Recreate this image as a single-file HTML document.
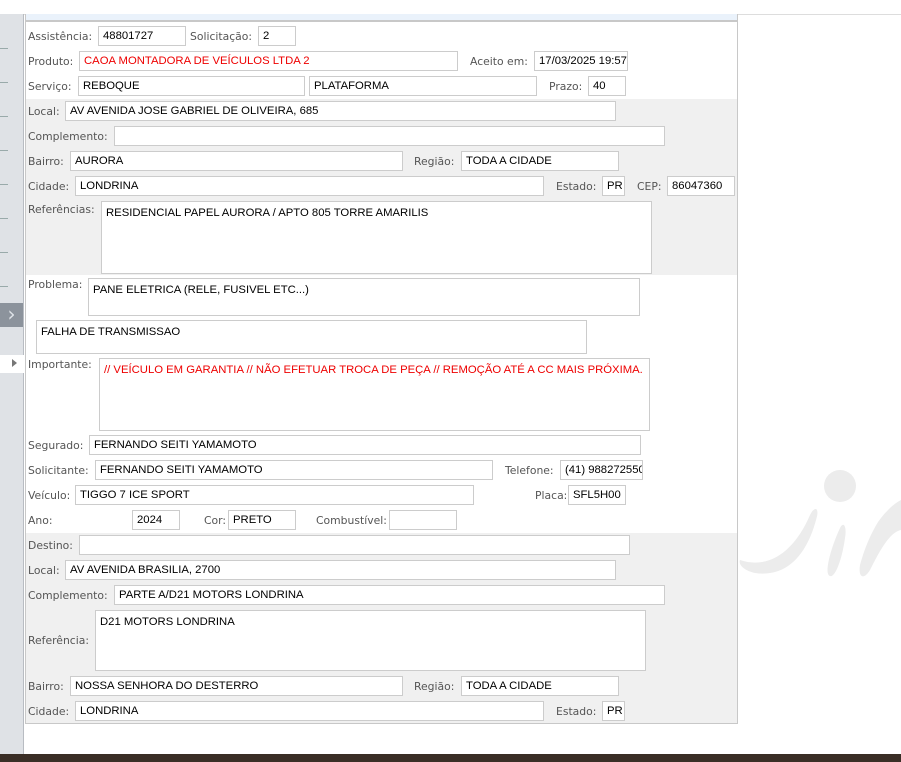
<!DOCTYPE html>
<html><head><meta charset="utf-8"><style>
*{margin:0;padding:0;box-sizing:border-box}
body{width:901px;height:762px;background:#fff;position:relative;overflow:hidden;font-family:"DejaVu Sans",Verdana,sans-serif}
.a{position:absolute}
.l{position:absolute;font-size:10.8px;color:#555;line-height:20px;white-space:nowrap}
.i{position:absolute;background:#fff;border:1px solid #ccc;height:20px;font-family:"Liberation Sans",Tahoma,sans-serif;font-size:11.3px;color:#000;line-height:19px;padding-left:4px;white-space:nowrap;overflow:hidden}
.t{line-height:14px;padding-top:4px}
.r{color:#e00}
.g{position:absolute;left:26px;width:711px;background:#f0f0f0}
.tick{position:absolute;left:0;width:8px;height:1px;background:#9aa}
</style></head><body>
<div class="a" style="left:0;top:14px;width:901px;height:1px;background:#ddd"></div>
<div class="a" style="left:0;top:14px;width:24px;height:740px;background:#dfe2e6;border-right:1px solid #b8bcc2"></div>
<div class="tick" style="top:48px"></div><div class="tick" style="top:82px"></div><div class="tick" style="top:116px"></div><div class="tick" style="top:150px"></div><div class="tick" style="top:184px"></div><div class="tick" style="top:218px"></div><div class="tick" style="top:252px"></div><div class="tick" style="top:286px"></div>
<div class="a" style="left:0;top:303px;width:23px;height:24px;background:#8c939c;color:#dfe3e8;font-size:20px;line-height:22px;text-align:center">›</div>
<div class="a" style="left:0;top:355px;width:24px;height:18px;background:#fff"></div>
<div class="a" style="left:12px;top:359px;width:0;height:0;border-left:5px solid #777;border-top:4px solid transparent;border-bottom:4px solid transparent"></div>
<div class="a" style="left:25px;top:14px;width:713px;height:710px;border:1px solid #c8c8c8;border-top:none"></div>
<div class="a" style="left:26px;top:14px;width:711px;height:8px;background:#eaf2fb;border-bottom:2px solid #c8c8c8"></div>
<div class="g" style="top:99px;height:176px"></div>
<div class="g" style="top:533px;height:190px"></div>
<svg class="a" style="left:730px;top:460px" width="171" height="120" viewBox="0 0 171 120">
<circle cx="110" cy="26" r="16" fill="#ececec"/>
<path d="M10 100 C40 110 65 90 80 55 C85 45 90 48 86 60 C78 90 60 118 25 113 C15 111 8 105 10 100Z" fill="#ececec"/>
<path d="M115 78 C112 100 105 118 100 116 C94 114 100 90 110 68 C114 60 117 68 115 78Z" fill="#ececec"/>
<path d="M148 62 C160 45 171 40 171 40 L171 70 C160 72 150 90 140 110 C134 120 128 118 130 105 C134 90 140 75 148 62Z" fill="#ececec"/>
</svg>
<div class="l" style="left:28px;top:27px">Assistência:</div><div class="i" style="left:98px;top:26px;width:88px">48801727</div>
<div class="l" style="left:190px;top:27px">Solicitação:</div><div class="i" style="left:258px;top:26px;width:38px">2</div>
<div class="l" style="left:28px;top:52px">Produto:</div><div class="i r" style="left:79px;top:51px;width:379px">CAOA MONTADORA DE VEÍCULOS LTDA 2</div>
<div class="l" style="left:470px;top:52px">Aceito em:</div><div class="i" style="left:534px;top:51px;width:94px">17/03/2025 19:57</div>
<div class="l" style="left:28px;top:77px">Serviço:</div><div class="i" style="left:78px;top:76px;width:227px">REBOQUE</div><div class="i" style="left:309px;top:76px;width:228px">PLATAFORMA</div>
<div class="l" style="left:549px;top:77px">Prazo:</div><div class="i" style="left:588px;top:76px;width:38px">40</div>
<div class="l" style="left:28px;top:102px">Local:</div><div class="i" style="left:65px;top:101px;width:551px">AV AVENIDA JOSE GABRIEL DE OLIVEIRA, 685</div>
<div class="l" style="left:28px;top:127px">Complemento:</div><div class="i" style="left:114px;top:126px;width:551px"></div>
<div class="l" style="left:28px;top:152px">Bairro:</div><div class="i" style="left:70px;top:151px;width:333px">AURORA</div>
<div class="l" style="left:414px;top:152px">Região:</div><div class="i" style="left:461px;top:151px;width:158px">TODA A CIDADE</div>
<div class="l" style="left:28px;top:177px">Cidade:</div><div class="i" style="left:75px;top:176px;width:469px">LONDRINA</div>
<div class="l" style="left:556px;top:177px">Estado:</div><div class="i" style="left:602px;top:176px;width:23px">PR</div>
<div class="l" style="left:637px;top:177px">CEP:</div><div class="i" style="left:667px;top:176px;width:68px">86047360</div>
<div class="l" style="left:28px;top:200px">Referências:</div><div class="i t" style="left:101px;top:201px;width:551px;height:73px">RESIDENCIAL PAPEL AURORA / APTO 805 TORRE AMARILIS</div>
<div class="l" style="left:28px;top:275px">Problema:</div><div class="i t" style="left:88px;top:278px;width:552px;height:38px">PANE ELETRICA (RELE, FUSIVEL ETC...)</div>
<div class="i t" style="left:36px;top:320px;width:551px;height:34px">FALHA DE TRANSMISSAO</div>
<div class="l" style="left:28px;top:355px">Importante:</div><div class="i t r" style="left:99px;top:358px;width:551px;height:73px">// VEÍCULO EM GARANTIA // NÃO EFETUAR TROCA DE PEÇA // REMOÇÃO ATÉ A CC MAIS PRÓXIMA.</div>
<div class="l" style="left:28px;top:436px">Segurado:</div><div class="i" style="left:89px;top:435px;width:552px">FERNANDO SEITI YAMAMOTO</div>
<div class="l" style="left:28px;top:461px">Solicitante:</div><div class="i" style="left:95px;top:460px;width:398px">FERNANDO SEITI YAMAMOTO</div>
<div class="l" style="left:505px;top:461px">Telefone:</div><div class="i" style="left:560px;top:460px;width:83px">(41) 988272550</div>
<div class="l" style="left:28px;top:486px">Veículo:</div><div class="i" style="left:75px;top:485px;width:399px">TIGGO 7 ICE SPORT</div>
<div class="l" style="left:535px;top:486px">Placa:</div><div class="i" style="left:568px;top:485px;width:58px">SFL5H00</div>
<div class="l" style="left:28px;top:511px">Ano:</div><div class="i" style="left:132px;top:510px;width:48px">2024</div>
<div class="l" style="left:204px;top:511px">Cor:</div><div class="i" style="left:228px;top:510px;width:68px">PRETO</div>
<div class="l" style="left:316px;top:511px">Combustível:</div><div class="i" style="left:389px;top:510px;width:68px"></div>
<div class="l" style="left:28px;top:536px">Destino:</div><div class="i" style="left:79px;top:535px;width:551px"></div>
<div class="l" style="left:28px;top:561px">Local:</div><div class="i" style="left:65px;top:560px;width:551px">AV AVENIDA BRASILIA, 2700</div>
<div class="l" style="left:28px;top:586px">Complemento:</div><div class="i" style="left:114px;top:585px;width:551px">PARTE A/D21 MOTORS LONDRINA</div>
<div class="l" style="left:28px;top:631px">Referência:</div><div class="i t" style="left:95px;top:610px;width:551px;height:61px">D21 MOTORS LONDRINA</div>
<div class="l" style="left:28px;top:677px">Bairro:</div><div class="i" style="left:70px;top:676px;width:333px">NOSSA SENHORA DO DESTERRO</div>
<div class="l" style="left:414px;top:677px">Região:</div><div class="i" style="left:461px;top:676px;width:158px">TODA A CIDADE</div>
<div class="l" style="left:28px;top:702px">Cidade:</div><div class="i" style="left:75px;top:701px;width:469px">LONDRINA</div>
<div class="l" style="left:556px;top:702px">Estado:</div><div class="i" style="left:602px;top:701px;width:23px">PR</div>
<div class="a" style="left:0;top:754px;width:901px;height:8px;background:#3a2e26"></div>
</body></html>
